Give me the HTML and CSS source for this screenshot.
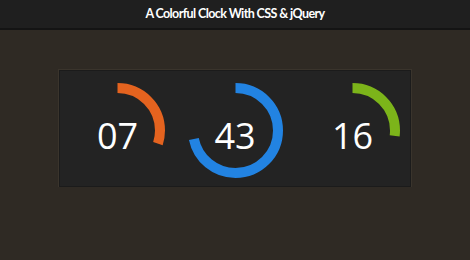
FILE: index.html
```html
<!DOCTYPE html>
<html lang="en">
<head>
    <meta charset="UTF-8">
    <title>A Colorful Clock With CSS &amp; jQuery</title>
    <link rel="stylesheet" href="styles.css">
</head>
<body>
<div id="header">A Colorful Clock With CSS &amp; jQuery</div>
<div id="clock">
    <div class="dial orange">
        <svg viewBox="0 0 95 95">
            <circle cx="47.5" cy="47.5" r="42.5" style="stroke-dasharray: 80 267.04;"></circle>
        </svg>
        <span class="num">07</span>
    </div>
    <div class="dial blue">
        <svg viewBox="0 0 95 95">
            <circle cx="47.5" cy="47.5" r="42.5" style="stroke-dasharray: 191.4 267.04;"></circle>
        </svg>
        <span class="num">43</span>
    </div>
    <div class="dial green">
        <svg viewBox="0 0 95 95">
            <circle cx="47.5" cy="47.5" r="42.5" style="stroke-dasharray: 72 267.04;"></circle>
        </svg>
        <span class="num">16</span>
    </div>
</div>
</body>
</html>
```

FILE: styles.css
```css
* {
    margin: 0;
    padding: 0;
}

body {
    background: #2f2a24;
    font-family: "Open Sans", "Liberation Sans", sans-serif;
    color: #fff;
}

#header {
    height: 28px;
    line-height: 27px;
    text-align: center;
    font-family: Lato, "Liberation Sans", sans-serif;
    font-size: 12.5px;
    font-weight: bold;
    letter-spacing: -0.6px;
    background: #1f1f1f;
    border-bottom: 2px solid #141414;
}

#clock {
    display: flex;
    justify-content: center;
    gap: 22.5px;
    width: 352px;
    height: 117px;
    margin: 40px auto 0;
    padding-top: 12px;
    box-sizing: border-box;
    background: #232323;
    border: 1px solid #1b1b1b;
    box-shadow: 0 0 0 1px #3a342c;
}

.dial {
    display: grid;
    width: 95px;
    height: 95px;
}

.dial svg,
.dial .num {
    grid-area: 1 / 1;
}

.dial svg {
    width: 95px;
    height: 95px;
    transform: rotate(-90deg);
}

.dial circle {
    fill: none;
    stroke-width: 10;
}

.orange circle {
    stroke: #e4631f;
}

.blue circle {
    stroke: #2283e2;
}

.green circle {
    stroke: #7cb41a;
}

.num {
    align-self: center;
    justify-self: center;
    padding-top: 10px;
    font-size: 36px;
    line-height: 36px;
}
```
